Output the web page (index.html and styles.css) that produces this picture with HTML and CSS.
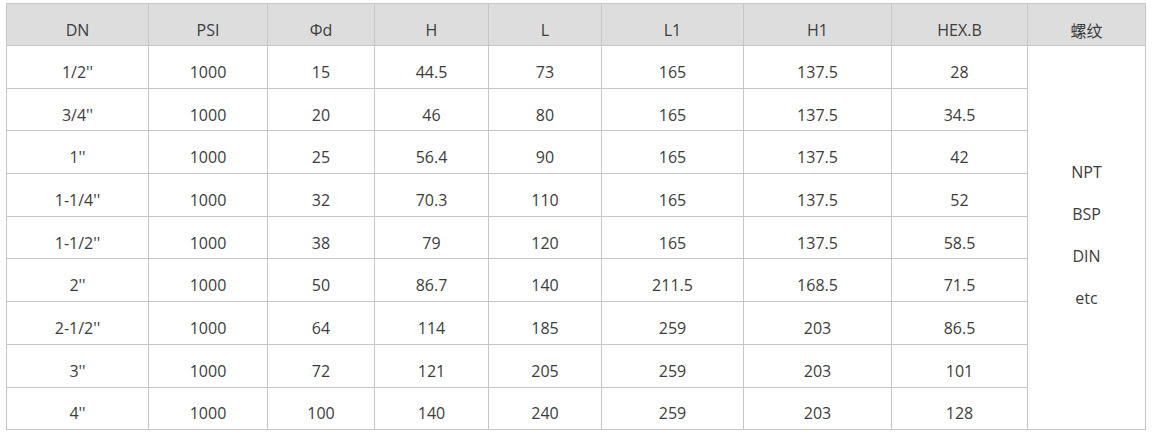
FILE: index.html
```html
<!DOCTYPE html>
<html lang="zh">
<head>
<meta charset="utf-8">
<title>Spec table</title>
<link rel="stylesheet" href="styles.css">
</head>
<body>
<div class="wrap">
<table class="spec">
  <colgroup>
    <col class="c1"><col class="c2"><col class="c3"><col class="c4"><col class="c5"><col class="c6"><col class="c7"><col class="c8"><col class="c9">
  </colgroup>
  <thead>
    <tr><th>DN</th><th>PSI</th><th>Φd</th><th>H</th><th>L</th><th>L1</th><th>H1</th><th>HEX.B</th><th class="cjk">螺纹</th></tr>
  </thead>
  <tbody>
    <tr><td>1/2''</td><td>1000</td><td>15</td><td>44.5</td><td>73</td><td>165</td><td>137.5</td><td>28</td>
      <td rowspan="9" class="thread"><div class="thread-list"><span>NPT</span><span>BSP</span><span>DIN</span><span>etc</span></div></td></tr>
    <tr><td>3/4''</td><td>1000</td><td>20</td><td>46</td><td>80</td><td>165</td><td>137.5</td><td>34.5</td></tr>
    <tr><td>1''</td><td>1000</td><td>25</td><td>56.4</td><td>90</td><td>165</td><td>137.5</td><td>42</td></tr>
    <tr><td>1-1/4''</td><td>1000</td><td>32</td><td>70.3</td><td>110</td><td>165</td><td>137.5</td><td>52</td></tr>
    <tr><td>1-1/2''</td><td>1000</td><td>38</td><td>79</td><td>120</td><td>165</td><td>137.5</td><td>58.5</td></tr>
    <tr><td>2''</td><td>1000</td><td>50</td><td>86.7</td><td>140</td><td>211.5</td><td>168.5</td><td>71.5</td></tr>
    <tr><td>2-1/2''</td><td>1000</td><td>64</td><td>114</td><td>185</td><td>259</td><td>203</td><td>86.5</td></tr>
    <tr><td>3''</td><td>1000</td><td>72</td><td>121</td><td>205</td><td>259</td><td>203</td><td>101</td></tr>
    <tr><td>4''</td><td>1000</td><td>100</td><td>140</td><td>240</td><td>259</td><td>203</td><td>128</td></tr>
  </tbody>
</table>
</div>
</body>
</html>
```
FILE: styles.css
```css
html, body {
  margin: 0;
  padding: 0;
  background: #ffffff;
}
.wrap {
  padding: 3px 0 0 6px;
}
.spec {
  border-collapse: collapse;
  table-layout: fixed;
  width: 1139px;
  font-family: "Open Sans", "Noto Sans CJK SC", sans-serif;
  font-size: 16px;
  color: #3c3c3c;
}
.c1 { width: 142px; }
.c2 { width: 119px; }
.c3 { width: 107px; }
.c4 { width: 114px; }
.c5 { width: 113px; }
.c6 { width: 142px; }
.c7 { width: 148px; }
.c8 { width: 136px; }
.c9 { width: 118px; }
.spec th, .spec td {
  border: 1px solid #c6c6c6;
  text-align: center;
  vertical-align: middle;
  padding: 10px 0 0;
  font-weight: normal;
  line-height: 22px;
}
.spec thead tr { height: 42px; }
.spec thead th { background: #dddddd; }
.spec tbody tr { height: 42.7px; }
.cjk {
  font-family: "Noto Sans CJK SC", sans-serif;
}
.spec td.thread {
  padding: 0 0 6px;
}
.thread-list {
  display: flex;
  flex-direction: column;
  align-items: center;
  line-height: 42px;
}
```
